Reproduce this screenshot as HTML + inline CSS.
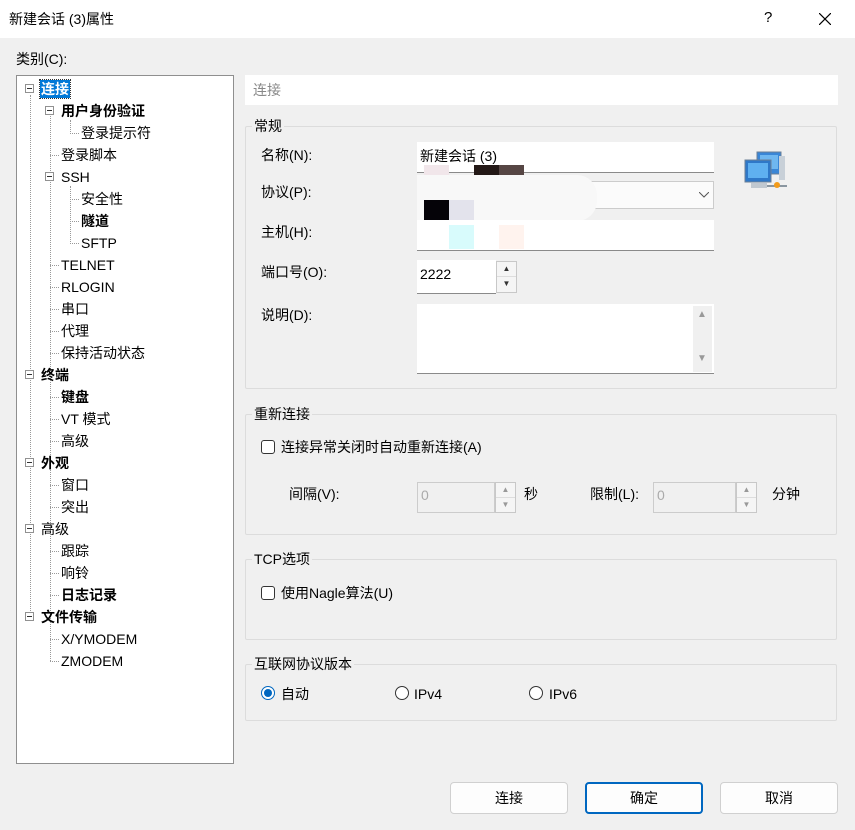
<!DOCTYPE html>
<html><head><meta charset="utf-8"><style>
*{margin:0;padding:0;box-sizing:border-box}
body{width:855px;height:830px;background:#f0f0f0;font-family:"Liberation Sans","Noto Sans CJK SC",sans-serif;font-size:14px;color:#000;position:relative;overflow:hidden}
.a{position:absolute;white-space:nowrap}
.t{position:absolute;line-height:18px;white-space:nowrap}
.box{position:absolute;width:9px;height:9px;border:1px solid #919191;background:#fff}
.box:after{content:"";position:absolute;left:1px;top:3px;width:5px;height:1px;background:#333}
.hd{position:absolute;border-top:1px dotted #999;height:0}
.vd{position:absolute;border-left:1px dotted #999;width:0}
.grp{position:absolute;border:1px solid #dcdcdc;border-radius:2px}
.gl{position:absolute;background:#f0f0f0;padding:0 2px;line-height:16px}
.inp{position:absolute;background:#fff;border-bottom:1px solid #8a8a8a}
.spin{position:absolute;width:21px;border:1px solid #c8c8c8;background:#f5f5f5}
.spin div{height:50%;border-bottom:1px solid #ddd;text-align:center;font-size:8px;line-height:13px;color:#333}
.cb{position:absolute;width:14px;height:14px;border:1px solid #333;border-radius:3px;background:#fff}
.rb{position:absolute;width:14px;height:14px;border:1px solid #333;border-radius:50%;background:#fff}
.btn{position:absolute;top:782px;width:118px;height:32px;background:#fdfdfd;border:1px solid #d0d0d0;border-radius:4px;text-align:center;line-height:30px}
</style></head><body>
<div class="a" style="left:0;top:0;width:855px;height:38px;background:#fff"></div>
<div class="a" style="left:9px;top:10px;line-height:18px">新建会话 (3)属性</div>
<div class="a" style="left:764px;top:9px;font-size:15px">?</div>
<svg class="a" style="left:819px;top:13px" width="12" height="12"><path d="M0 0L12 12M12 0L0 12" stroke="#000" stroke-width="1.2"/></svg>
<div class="a" style="left:16px;top:50px;line-height:18px">类别(C):</div>

<div class="a" style="left:16px;top:75px;width:218px;height:689px;background:#fff;border:1px solid #8f8f8f"></div>
<div class="vd" style="left:30px;top:95px;height:522px"></div>
<div class="vd" style="left:50px;top:116px;height:545px"></div>
<div class="vd" style="left:70px;top:120px;height:12px"></div>
<div class="vd" style="left:70px;top:186px;height:56px"></div>
<div id="tree"></div>

<div class="a" style="left:245px;top:75px;width:593px;height:30px;background:#fff"></div>
<div class="a" style="left:253px;top:81px;color:#888;line-height:18px">连接</div>

<div class="grp" style="left:245px;top:126px;width:592px;height:263px"></div>
<div class="gl" style="left:252px;top:118px">常规</div>
<div class="t" style="left:261px;top:146px">名称(N):</div>
<div class="t" style="left:261px;top:183px">协议(P):</div>
<div class="t" style="left:261px;top:223px">主机(H):</div>
<div class="t" style="left:261px;top:263px">端口号(O):</div>
<div class="t" style="left:261px;top:306px">说明(D):</div>
<div class="inp" style="left:417px;top:142px;width:297px;height:31px"></div>
<div class="t" style="left:420px;top:147px">新建会话 (3)</div>
<div class="a" style="left:424px;top:165px;width:25px;height:10px;background:#f1e6ea"></div>
<div class="a" style="left:474px;top:165px;width:25px;height:10px;background:#231816"></div>
<div class="a" style="left:499px;top:165px;width:25px;height:10px;background:#564644"></div>
<div class="a" style="left:417px;top:181px;width:297px;height:28px;background:#fbfbfb;border:1px solid #ccc"></div>
<div class="a" style="left:417px;top:175px;width:180px;height:46px;background:#f8f8f8;border-radius:0 20px 20px 0"></div>
<svg class="a" style="left:699px;top:192px" width="10" height="6"><path d="M0 0L5 5L10 0" stroke="#555" fill="none"/></svg>
<div class="a" style="left:424px;top:200px;width:25px;height:25px;background:#050308"></div>
<div class="a" style="left:449px;top:200px;width:25px;height:25px;background:#e3e3ec"></div>
<div class="inp" style="left:417px;top:220px;width:297px;height:31px"></div>
<div class="a" style="left:449px;top:225px;width:25px;height:24px;background:#d8fbfc"></div>
<div class="a" style="left:499px;top:225px;width:25px;height:24px;background:#fff3ee"></div>
<div class="inp" style="left:417px;top:260px;width:79px;height:34px"></div>
<div class="t" style="left:420px;top:265px">2222</div>
<div class="spin" style="left:496px;top:261px;height:32px"><div>▲</div><div style="border:0">▼</div></div>
<div class="inp" style="left:417px;top:304px;width:297px;height:70px"></div>
<div class="a" style="left:693px;top:306px;width:19px;height:66px;background:#f0f0f0"></div>
<div class="a" style="left:697px;top:309px;font-size:10px;color:#999">▲</div>
<div class="a" style="left:697px;top:353px;font-size:10px;color:#999">▼</div>
<svg class="a" style="left:743px;top:150px" width="46" height="42">
<rect x="14" y="2" width="24" height="22" fill="#3a86d6" stroke="#6b7f96"/><rect x="17" y="5" width="18" height="14" fill="#6fb7f0"/>
<rect x="2" y="10" width="26" height="22" fill="#2f78c8" stroke="#6b7f96"/><rect x="5" y="13" width="20" height="15" fill="#5fb0f0"/>
<rect x="8" y="33" width="16" height="5" fill="#c0c8d0"/><rect x="36" y="6" width="6" height="24" fill="#c8d0d8"/>
<path d="M24 36H44" stroke="#8a96a0" stroke-width="2"/><circle cx="34" cy="35" r="3" fill="#f29b1a"/></svg>

<div class="grp" style="left:245px;top:414px;width:592px;height:121px"></div>
<div class="gl" style="left:252px;top:406px">重新连接</div>
<div class="cb" style="left:261px;top:440px"></div>
<div class="t" style="left:281px;top:438px">连接异常关闭时自动重新连接(A)</div>
<div class="t" style="left:289px;top:485px">间隔(V):</div>
<div class="a" style="left:417px;top:482px;width:78px;height:31px;background:#f0f0f0;border:1px solid #ccc"></div>
<div class="t" style="left:421px;top:486px;color:#aaa">0</div>
<div class="spin" style="left:495px;top:482px;height:31px;color:#888"><div style="color:#999">▲</div><div style="border:0;color:#999">▼</div></div>
<div class="t" style="left:524px;top:485px">秒</div>
<div class="t" style="left:590px;top:485px">限制(L):</div>
<div class="a" style="left:653px;top:482px;width:83px;height:31px;background:#f0f0f0;border:1px solid #ccc"></div>
<div class="t" style="left:657px;top:486px;color:#aaa">0</div>
<div class="spin" style="left:736px;top:482px;height:31px"><div style="color:#999">▲</div><div style="border:0;color:#999">▼</div></div>
<div class="t" style="left:772px;top:485px">分钟</div>

<div class="grp" style="left:245px;top:559px;width:592px;height:81px"></div>
<div class="gl" style="left:252px;top:551px">TCP选项</div>
<div class="cb" style="left:261px;top:586px"></div>
<div class="t" style="left:281px;top:584px">使用Nagle算法(U)</div>

<div class="grp" style="left:245px;top:664px;width:592px;height:57px"></div>
<div class="gl" style="left:252px;top:656px">互联网协议版本</div>
<div class="rb" style="left:261px;top:686px;border-color:#0067c0;background:#fff"><div style="position:absolute;left:2px;top:2px;width:8px;height:8px;border-radius:50%;background:#0067c0"></div></div>
<div class="t" style="left:281px;top:685px">自动</div>
<div class="rb" style="left:395px;top:686px"></div>
<div class="t" style="left:414px;top:685px">IPv4</div>
<div class="rb" style="left:529px;top:686px"></div>
<div class="t" style="left:549px;top:685px">IPv6</div>

<div class="btn" style="left:450px">连接</div>
<div class="btn" style="left:585px;border:2px solid #0067c0;line-height:28px">确定</div>
<div class="btn" style="left:720px">取消</div>

<script>
var items=[["连接",0,1,1],["用户身份验证",1,1,1],["登录提示符",2],["登录脚本",1],["SSH",1,1],["安全性",2],["隧道",2,0,1],["SFTP",2],["TELNET",1],["RLOGIN",1],["串口",1],["代理",1],["保持活动状态",1],["终端",0,1,1],["键盘",1,0,1],["VT 模式",1],["高级",1],["外观",0,1,1],["窗口",1],["突出",1],["高级",0,1],["跟踪",1],["响铃",1],["日志记录",1,0,1],["文件传输",0,1,1],["X/YMODEM",1],["ZMODEM",1]];
var h="";
items.forEach(function(it,i){var y=89+22*i,l=it[1],tx=41+20*l;
if(it[2])h+='<div class="box" style="left:'+(tx-16)+'px;top:'+(y-5)+'px"></div>';
else h+='<div class="hd" style="left:'+(tx-11)+'px;top:'+y+'px;width:9px"></div>';
var st='left:'+tx+'px;top:'+(y-9)+'px;';
if(it[3])st+='font-weight:bold;';
if(i==0)st+='background:#0078d7;color:#fff;padding:0 1px;left:'+(tx-1)+'px;outline:1px dotted #333;';
h+='<div class="t" style="'+st+'">'+it[0]+'</div>';});
document.getElementById("tree").innerHTML=h;
</script>
</body></html>
